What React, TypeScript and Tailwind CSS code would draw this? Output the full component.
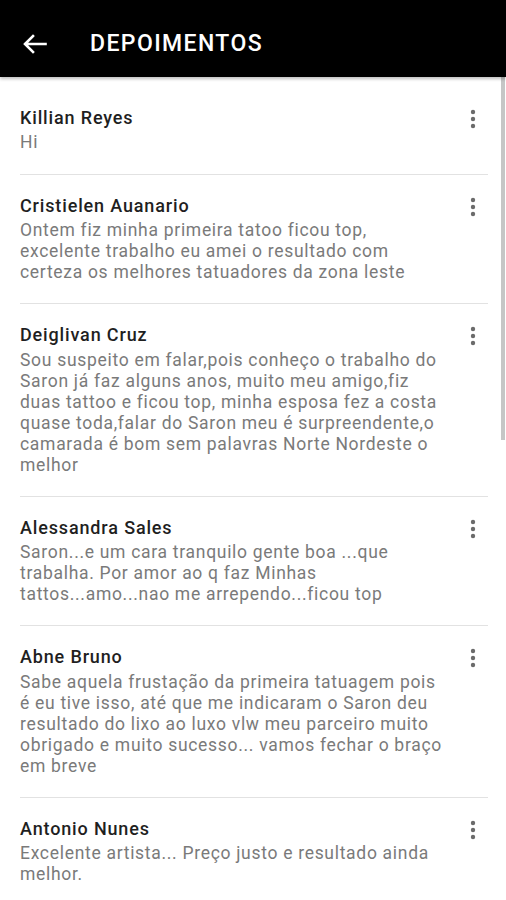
const items = [
  { name: "Killian Reyes", lines: ["Hi"] },
  {
    name: "Cristielen Auanario",
    lines: [
      "Ontem fiz minha primeira tatoo ficou top,",
      "excelente trabalho eu amei o resultado com",
      "certeza os melhores tatuadores da zona leste",
    ],
  },
  {
    name: "Deiglivan Cruz",
    lines: [
      "Sou suspeito em falar,pois conheço o trabalho do",
      "Saron já faz alguns anos, muito meu amigo,fiz",
      "duas tattoo e ficou top, minha esposa fez a costa",
      "quase toda,falar do Saron meu é surpreendente,o",
      "camarada é bom sem palavras Norte Nordeste o",
      "melhor",
    ],
  },
  {
    name: "Alessandra Sales",
    lines: [
      "Saron...e um cara tranquilo gente boa ...que",
      "trabalha. Por amor ao q faz Minhas",
      "tattos...amo...nao me arrependo...ficou top",
    ],
  },
  {
    name: "Abne Bruno",
    lines: [
      "Sabe aquela frustação da primeira tatuagem pois",
      "é eu tive isso, até que me indicaram o Saron deu",
      "resultado do lixo ao luxo vlw meu parceiro muito",
      "obrigado e muito sucesso... vamos fechar o braço",
      "em breve",
    ],
  },
  {
    name: "Antonio Nunes",
    lines: ["Excelente artista... Preço justo e resultado ainda", "melhor."],
  },
];

function MoreIcon() {
  return (
    <svg width="6" height="20" viewBox="0 0 6 20" className="mt-[2px]">
      <circle cx="3" cy="3" r="2.2" fill="#6b6b6b" />
      <circle cx="3" cy="10" r="2.2" fill="#6b6b6b" />
      <circle cx="3" cy="17" r="2.2" fill="#6b6b6b" />
    </svg>
  );
}

export default function App() {
  return (
    <div
      className="relative w-[506px] h-[900px] overflow-hidden bg-white"
      style={{ fontFamily: "Roboto, 'Liberation Sans', sans-serif" }}
    >
      <header className="relative z-10 h-[77px] pt-[11px] bg-black flex items-center shadow-[0_2px_3px_rgba(0,0,0,0.25)]">
        <svg width="24" height="20" viewBox="0 0 24 20" className="ml-[23px]">
          <path
            d="M22.5 10H2.5M10 2L2 10l8 8"
            stroke="white"
            strokeWidth="2.6"
            fill="none"
            strokeLinecap="square"
          />
        </svg>
        <h1 className="ml-[43px] text-white text-[23px] font-medium tracking-[1.4px]">
          DEPOIMENTOS
        </h1>
      </header>

      <div className="pt-[10px]">
        {items.map((item) => (
          <div
            key={item.name}
            className="ml-[20px] mr-[18px] pt-[19px] pb-[20.2px] border-b border-[#e2e2e2] flex"
          >
            <div className="flex-1">
              <div className="text-[18px] leading-[24px] font-medium text-[#1f1f1f] tracking-[0.85px]">
                {item.name}
              </div>
              <div className="mt-[2.4px] text-[17.5px] leading-[21px] text-[#7a7a7a] tracking-[0.7px]">
                {item.lines.map((l, i) => (
                  <div key={i} className="whitespace-nowrap">
                    {l}
                  </div>
                ))}
              </div>
            </div>
            <div className="w-[20px] pt-[1px] flex justify-end pr-[12px] box-content">
              <MoreIcon />
            </div>
          </div>
        ))}
      </div>

      <div className="absolute right-[1px] top-[77px] w-[4px] h-[363px] bg-[#c6c6c6]" />
    </div>
  );
}
